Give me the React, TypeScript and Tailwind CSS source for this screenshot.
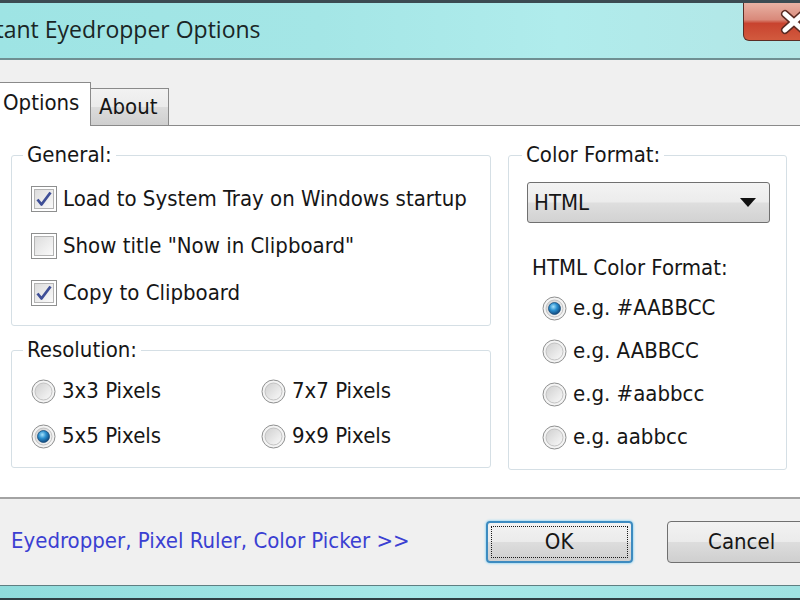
import React from "react";

const FONT = "font-[family-name:'DejaVu_Sans_Condensed','Liberation_Sans',sans-serif]";

function CheckBox({ checked }: { checked: boolean }) {
  return (
    <svg width="26" height="26" viewBox="0 0 26 26" className="shrink-0">
      <defs>
        <linearGradient id="cbfill" x1="0" y1="0" x2="1" y2="1">
          <stop offset="0" stopColor="#dcdcdc" />
          <stop offset="1" stopColor="#fbfbfb" />
        </linearGradient>
      </defs>
      <rect x="0.5" y="0.5" width="25" height="25" fill="#fff" stroke="#8e8f8f" />
      <rect x="3.5" y="3.5" width="19" height="19" fill="url(#cbfill)" stroke="#b4b4b4" />
      {checked && (
        <path d="M6.5 13.5 L10.5 18.5 L19.5 6.5" fill="none" stroke="#3f4f97" strokeWidth="2.8" strokeLinejoin="round" />
      )}
    </svg>
  );
}

function Radio({ checked }: { checked: boolean }) {
  return (
    <svg width="25" height="25" viewBox="0 0 25 25" className="shrink-0">
      <defs>
        <linearGradient id="rbfill" x1="0" y1="0" x2="1" y2="1">
          <stop offset="0" stopColor="#cfcfcf" />
          <stop offset="1" stopColor="#fafafa" />
        </linearGradient>
        <radialGradient id="rbdot" cx="0.4" cy="0.35" r="0.7">
          <stop offset="0" stopColor="#a6e2fb" />
          <stop offset="0.45" stopColor="#2a8fcf" />
          <stop offset="1" stopColor="#0d3f73" />
        </radialGradient>
      </defs>
      <circle cx="12.5" cy="12.5" r="11.5" fill="#f4f4f4" stroke="#8e8f8f" />
      <circle cx="12.5" cy="12.5" r="8.5" fill="url(#rbfill)" stroke="#c2c2c2" />
      {checked && <circle cx="12.5" cy="12.5" r="6" fill="url(#rbdot)" stroke="#1c4e7a" strokeWidth="0.8" />}
    </svg>
  );
}

function Row({ box, label }: { box: React.ReactNode; label: string }) {
  return (
    <div className="flex h-[26px] items-center gap-[6px]">
      {box}
      <span className="leading-[26px] whitespace-nowrap">{label}</span>
    </div>
  );
}

export default function App() {
  return (
    <div className={`w-[800px] h-[600px] overflow-hidden flex flex-col bg-[#f0f0f0] text-[#161616] text-[22px] ${FONT}`}>
      {/* Title bar */}
      <div className="relative h-[60px] shrink-0 border-t-[3px] border-b-[2px] border-t-[#3b4b52] border-b-[#6f8f92] bg-[linear-gradient(90deg,#9ee4e4_0%,#a4e6e6_40%,#b0ecec_70%,#b3e6e6_100%)] flex items-start overflow-hidden">
        <div className="ml-[-36px] mt-[10px] text-[23px] leading-[32px] text-[#1a2626] font-[family-name:'Open_Sans','Noto_Sans',sans-serif] whitespace-nowrap">
          Instant Eyedropper Options
        </div>
        <div className="absolute left-[743px] top-0 w-[80px] h-[38px] rounded-bl-[6px] border border-t-0 border-[#5a2d25] bg-[linear-gradient(180deg,#e8b2a4_0%,#d9897a_45%,#c8432f_55%,#d25a3e_100%)] flex items-center">
          <svg width="30" height="26" viewBox="0 0 30 26" className="ml-[35px]">
            <path d="M6 5 L24 21 M24 5 L6 21" stroke="#5b2a22" strokeWidth="8" strokeLinecap="round" />
            <path d="M6 5 L24 21 M24 5 L6 21" stroke="#ffffff" strokeWidth="5" strokeLinecap="round" />
          </svg>
        </div>
      </div>

      {/* Tabs */}
      <div className="flex items-end h-[65px] shrink-0 pt-[21px]">
        <div className="relative z-10 ml-[-10px] w-[101px] h-[44px] mb-[-1px] shrink-0 bg-white border border-b-0 border-[#8a8a8a] pl-[12px] pt-[7px] leading-[26px]">
          Options
        </div>
        <div className="w-[78px] h-[37px] shrink-0 border border-l-0 border-b-0 border-[#8a8a8a] bg-[linear-gradient(180deg,#f2f2f2_0%,#ebebeb_50%,#dcdcdc_51%,#cfcfcf_100%)] pl-[8px] pt-[5px] leading-[26px]">
          About
        </div>
      </div>

      {/* Panel */}
      <div className="h-[374px] shrink-0 ml-[-2px] w-[820px] bg-white border-t border-t-[#8a8a8a] border-b-[2px] border-b-[#a3a3a3] pl-[13px] pt-[17px] flex gap-[17px]">
        <div className="w-[480px] shrink-0 flex flex-col gap-[12px]">
          <fieldset className="border border-[#d5dfe5] rounded-[3px] pl-[19px] pt-[19px] pb-[19px] flex flex-col gap-[21px]">
            <legend className="ml-[-8px] px-[4px] leading-[24px]">General:</legend>
            <Row box={<CheckBox checked />} label="Load to System Tray on Windows startup" />
            <Row box={<CheckBox checked={false} />} label={'Show title "Now in Clipboard"'} />
            <Row box={<CheckBox checked />} label="Copy to Clipboard" />
          </fieldset>
          <fieldset className="border border-[#d5dfe5] rounded-[3px] pl-[19px] pt-[16px] pb-[18px] grid grid-cols-[230px_1fr] gap-y-[19px]">
            <legend className="ml-[-8px] px-[4px] leading-[24px]">Resolution:</legend>
            <Row box={<Radio checked={false} />} label="3x3 Pixels" />
            <Row box={<Radio checked={false} />} label="7x7 Pixels" />
            <Row box={<Radio checked />} label="5x5 Pixels" />
            <Row box={<Radio checked={false} />} label="9x9 Pixels" />
          </fieldset>
        </div>
        <fieldset className="w-[279px] shrink-0 self-stretch mb-[27px] border border-[#d5dfe5] rounded-[3px] pl-[18px] pr-[16px] pt-[15px] flex flex-col">
          <legend className="ml-[-5px] px-[4px] leading-[24px]">Color Format:</legend>
          <div className="h-[41px] rounded-[3px] border border-[#707070] bg-[linear-gradient(180deg,#f3f3f3_0%,#ececec_48%,#dedede_52%,#d2d2d2_100%)] flex items-center pl-[6px] pr-[13px] justify-between">
            <span className="leading-[26px]">HTML</span>
            <svg width="16" height="9" viewBox="0 0 16 9">
              <path d="M0 0 H16 L8 9 Z" fill="#111" />
            </svg>
          </div>
          <div className="mt-[33px] ml-[5px] leading-[24px] whitespace-nowrap">HTML Color Format:</div>
          <div className="mt-[15px] ml-[15px] flex flex-col gap-[17px]">
            <Row box={<Radio checked />} label="e.g. #AABBCC" />
            <Row box={<Radio checked={false} />} label="e.g. AABBCC" />
            <Row box={<Radio checked={false} />} label="e.g. #aabbcc" />
            <Row box={<Radio checked={false} />} label="e.g. aabbcc" />
          </div>
        </fieldset>
      </div>

      {/* Footer */}
      <div className="h-[86px] shrink-0 flex items-center pl-[11px]">
        <span className="shrink-0 text-[#3b3fd2] whitespace-nowrap leading-[26px] mt-[-2px]">Eyedropper, Pixel Ruler, Color Picker &gt;&gt;</span>
        <div className="ml-[76px] shrink-0 w-[147px] h-[42px] rounded-[4px] border-[2px] border-[#3d8bc0] shadow-[0_0_2px_1px_#a8dcf3] bg-[linear-gradient(180deg,#f2f2f2_0%,#ebebeb_50%,#dddddd_51%,#cfcfcf_100%)] p-[3px]">
          <div className="w-full h-full border border-dotted border-[#1a1a1a] flex items-center justify-center leading-[26px]">OK</div>
        </div>
        <div className="ml-[34px] w-[150px] h-[42px] shrink-0 rounded-[4px] border border-[#707070] bg-[linear-gradient(180deg,#f2f2f2_0%,#ebebeb_50%,#dddddd_51%,#cfcfcf_100%)] flex items-center justify-center leading-[26px]">
          Cancel
        </div>
      </div>

      {/* Bottom frame */}
      <div className="flex-1 border-t border-t-[#5f7f82] border-b-[2px] border-b-[#2f3f44] bg-[linear-gradient(90deg,#8fdcdc_0%,#a6e8e8_50%,#9fe2e2_100%)]" />
    </div>
  );
}
